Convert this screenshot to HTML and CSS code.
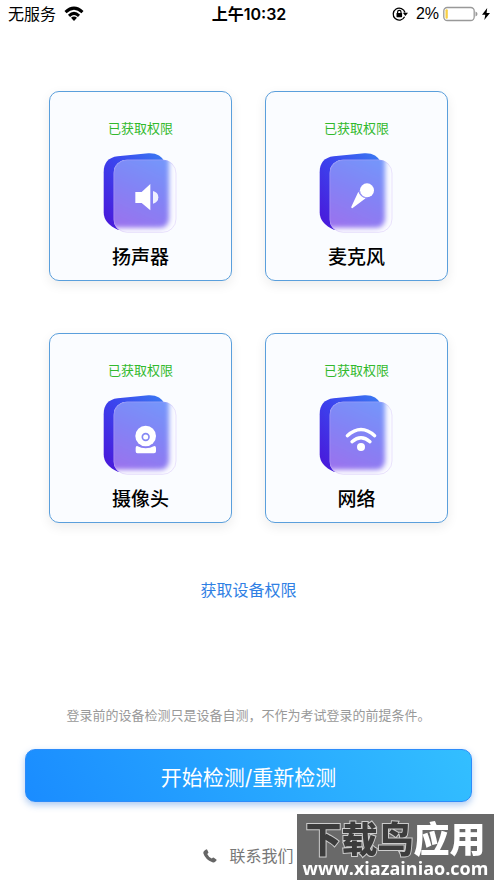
FILE: index.html
```
<!DOCTYPE html>
<html lang="zh-CN">
<head>
    <meta charset="UTF-8">
    <meta name="viewport" content="width=device-width, initial-scale=1.0">
    <title>设备检测</title>
    <link rel="stylesheet" href="styles.css">
</head>
<body>
    <!-- 公用图标底板 -->
    <svg class="defs" width="0" height="0" aria-hidden="true">
        <defs>
            <linearGradient id="backFill" x1="1" y1="0" x2="0" y2="1">
                <stop offset="0" stop-color="#3a7cf2"/>
                <stop offset="0.45" stop-color="#3b45ee"/>
                <stop offset="1" stop-color="#4b14d8"/>
            </linearGradient>
            <linearGradient id="frontFill" x1="0.7" y1="0" x2="0.3" y2="1">
                <stop offset="0" stop-color="#7398fb"/>
                <stop offset="0.5" stop-color="#8383f5"/>
                <stop offset="1" stop-color="#9a72ee"/>
            </linearGradient>
            <filter id="soft" x="-20%" y="-20%" width="140%" height="140%">
                <feGaussianBlur stdDeviation="8"/>
            </filter>
            <clipPath id="frontClip">
                <rect x="222" y="238" width="188" height="219" rx="40"/>
            </clipPath>
            <symbol id="tile" viewBox="190 215 225 246">
                <path fill="url(#backFill)" d="M192 276Q192 233 234 228L326 219Q362 217 376 246L300 440L236 449Q192 430 192 396Z"/>
                <g clip-path="url(#frontClip)">
                    <rect x="222" y="238" width="188" height="219" fill="#fbfbff"/>
                    <rect x="180" y="205" width="208" height="237" rx="26" fill="url(#frontFill)" filter="url(#soft)"/>
                </g>
                <rect x="223" y="239" width="186" height="217" rx="40" fill="none" stroke="#c0a8f5" stroke-opacity="0.3" stroke-width="3"/>
            </symbol>
        </defs>
    </svg>

    <header class="status-bar">
        <div class="status-left">
            <span>无服务</span>
            <svg width="20" height="16" viewBox="0 0 20 16">
                <g fill="none" stroke="#000" stroke-width="3">
                    <path d="M1.5 6.2Q10-1.8 18.500 6.200"/>
                    <path d="M5 9.800Q10 5 15 9.800"/>
                </g>
                <path d="M7 11.800Q10 9.200 13 11.800L10 15Z"/>
            </svg>
        </div>
        <div class="status-time">上午10:32</div>
        <div class="status-right">
            <svg width="16" height="16" viewBox="0 0 16 16">
                <path fill="none" stroke="#000" stroke-width="1.300" d="M12.600 10.800A6 6 0 1 1 13 6.500"/>
                <path d="M10.800 6.800H16L13.400 10Z"/>
                <rect x="4.500" y="7" width="5.600" height="4.200" rx="0.600"/>
                <path fill="none" stroke="#000" stroke-width="1.200" d="M5.600 7.500V6Q5.600 4.400 7.300 4.400T9 6V7.500"/>
            </svg>
            <span class="percent">2%</span>
            <svg width="35" height="16" viewBox="0 0 35 16">
                <rect x="0.800" y="1.500" width="30.400" height="13" rx="3.500" fill="none" stroke="#999" stroke-width="1.300"/>
                <rect x="2.500" y="3.200" width="2.300" height="9.600" rx="1" fill="#f8cf45"/>
                <path fill="#999" d="M32.500 5.500Q34.500 6.300 34.500 8T32.500 10.500Z"/>
            </svg>
            <svg width="8" height="14" viewBox="0 0 8 14">
                <path d="M5.200 1L0 7.800H3.300L2.300 13L8 5.900H4.600Z"/>
            </svg>
        </div>
    </header>

    <main class="content">
        <section class="device-grid">
            <div class="device-card">
                <span class="state">已获取权限</span>
                <svg class="device-icon" viewBox="190 215 225 246">
                    <use href="#tile" x="190" y="215" width="225" height="246"/>
                    <path fill="#fff" d="M287 335H306L332 311V390L306 368H287Z"/>
                    <path fill="#eef0ff" d="M340 332Q356 336 356 351T340 370Z"/>
                </svg>
                <h2 class="device-name">扬声器</h2>
            </div>
            <div class="device-card">
                <span class="state">已获取权限</span>
                <svg class="device-icon" viewBox="190 215 225 246">
                    <use href="#tile" x="190" y="215" width="225" height="246"/>
                    <circle cx="334" cy="330" r="21" fill="#fff"/>
                    <path fill="#fff" d="M308 334Q314 350 330 354L290 384Q286 384 287 379Z"/>
                    <path fill="none" stroke="#b9b4fa" stroke-width="2" d="M311 330Q315 349 333 353"/>
                </svg>
                <h2 class="device-name">麦克风</h2>
            </div>
            <div class="device-card">
                <span class="state">已获取权限</span>
                <svg class="device-icon" viewBox="190 215 225 246">
                    <use href="#tile" x="190" y="215" width="225" height="246"/>
                    <circle cx="318" cy="341" r="31" fill="#fff"/>
                    <circle cx="318" cy="344" r="10" fill="none" stroke="#8588f4" stroke-width="5"/>
                    <path fill="#fff" d="M292 371Q318 385 344 371Q349 371 349 377V387Q349 393 343 393H293Q288 393 288 387V377Q288 371 292 371Z"/>
                </svg>
                <h2 class="device-name">摄像头</h2>
            </div>
            <div class="device-card">
                <span class="state">已获取权限</span>
                <svg class="device-icon" viewBox="190 215 225 246">
                    <use href="#tile" x="190" y="215" width="225" height="246"/>
                    <g fill="none" stroke="#fff" stroke-width="10" stroke-linecap="round">
                        <path d="M275 340Q316 303 357 340"/>
                        <path d="M289 358Q316 334 343 358"/>
                    </g>
                    <circle cx="316" cy="374" r="12" fill="#fff"/>
                </svg>
                <h2 class="device-name">网络</h2>
            </div>
        </section>

        <button class="permission-btn" type="button">获取设备权限</button>
    </main>

    <footer class="footer">
        <p class="tip">登录前的设备检测只是设备自测，不作为考试登录的前提条件。</p>
        <button class="start-btn" type="button">开始检测/重新检测</button>
        <a class="contact" href="#">
            <svg width="14" height="14" viewBox="0 0 14 14">
                <path fill="#666" d="M1 2L3 .4Q3.700 0 4.200 .8L5.400 3.200Q5.600 3.900 5 4.300L4.200 5Q5.400 7.800 8.800 9.600L9.700 8.800Q10.200 8.400 10.900 8.800L13.300 10.400Q14 11 13.400 11.600L12 13Q11 13.700 9.400 13.200Q2.300 10.500 .4 4.500Q0 3 1 2Z"/>
            </svg>
            <span>联系我们</span>
        </a>
    </footer>

    <div class="watermark">
        <div class="mark-name"><span class="mark-dark">下载鸟</span>应用</div>
        <div class="mark-url">www.xiazainiao.com</div>
    </div>
</body>
</html>
```
FILE: styles.css
```
* {
    box-sizing: border-box;
}

body {
    margin: 0;
    min-height: 100vh;
    display: flex;
    flex-direction: column;
    background-color: #fff;
    color: #000;
    font-family: Inter, "Noto Sans CJK SC", sans-serif;
}

button {
    border: none;
    background: none;
    padding: 0;
    font-family: inherit;
    cursor: pointer;
}

svg {
    display: block;
    flex-shrink: 0;
}

.defs {
    position: absolute;
}

/* 顶部状态栏 */
.status-bar {
    display: grid;
    grid-template-columns: 1fr auto 1fr;
    align-items: center;
    height: 27px;
    padding: 0 7px 0 8px;
    font-size: 16px;
    line-height: 24px;
}

.status-left,
.status-right {
    display: flex;
    align-items: center;
    gap: 8px;
}

.status-right {
    justify-content: flex-end;
    gap: 4px;
}

.percent {
    margin-left: 4px;
    font-family: "Liberation Sans", sans-serif;
}

.status-time {
    font-weight: 600;
}

/* 设备卡片 */
.content {
    display: flex;
    flex-direction: column;
    align-items: center;
    padding: 64px 49px 0;
}

.device-grid {
    display: grid;
    grid-template-columns: 1fr 1fr;
    gap: 52px 33px;
    width: 100%;
}

.device-card {
    display: flex;
    flex-direction: column;
    align-items: center;
    padding: 26px 0 8px;
    border: 1px solid #5a9fdc;
    border-radius: 10px;
    background-color: #fafcff;
    box-shadow: 0 4px 12px rgba(0, 0, 0, 0.08);
}

.state {
    color: #32b92d;
    font-size: 13px;
    line-height: 20px;
}

.device-icon {
    width: 75px;
    height: 82px;
    margin: 14px 0 10px;
}

.device-name {
    margin: 0;
    font-size: 19px;
    font-weight: 500;
    line-height: 28px;
}

.permission-btn {
    margin-top: 55px;
    color: #2f80e4;
    font-size: 16px;
    line-height: 24px;
}

/* 底部操作区 */
.footer {
    display: flex;
    flex-direction: column;
    align-items: center;
    margin-top: auto;
    padding: 0 25px 15px;
}

.tip {
    margin: 0 0 24px;
    color: #999;
    font-size: 13px;
    line-height: 20px;
}

.start-btn {
    width: 100%;
    height: 53px;
    border: 1px solid #2d8cfa;
    border-radius: 10px;
    background: linear-gradient(60deg, #1a8cff, #33bfff);
    box-shadow: 0 3px 7px rgba(45, 120, 220, 0.4);
    color: #fff;
    font-size: 21px;
    font-weight: 400;
}

.contact {
    display: flex;
    align-items: center;
    gap: 12px;
    margin-top: 42px;
    color: #777;
    font-size: 16px;
    line-height: 24px;
    text-decoration: none;
}

/* 右下角水印 */
.watermark {
    position: fixed;
    right: 3px;
    bottom: 3px;
    width: 197px;
    height: 66px;
    padding: 4px 0 0;
    background-color: #696969;
    color: #fff;
    text-align: center;
    white-space: nowrap;
}

.mark-name {
    font-family: "Noto Sans CJK SC", sans-serif;
    font-size: 36px;
    font-weight: 900;
    line-height: 38px;
}

.mark-dark {
    color: #3c3c3c;
    -webkit-text-stroke: 2px #ccc;
    paint-order: stroke fill;
}

.mark-url {
    font-family: "Open Sans", sans-serif;
    font-size: 18px;
    font-weight: 700;
    line-height: 24px;
}
```
